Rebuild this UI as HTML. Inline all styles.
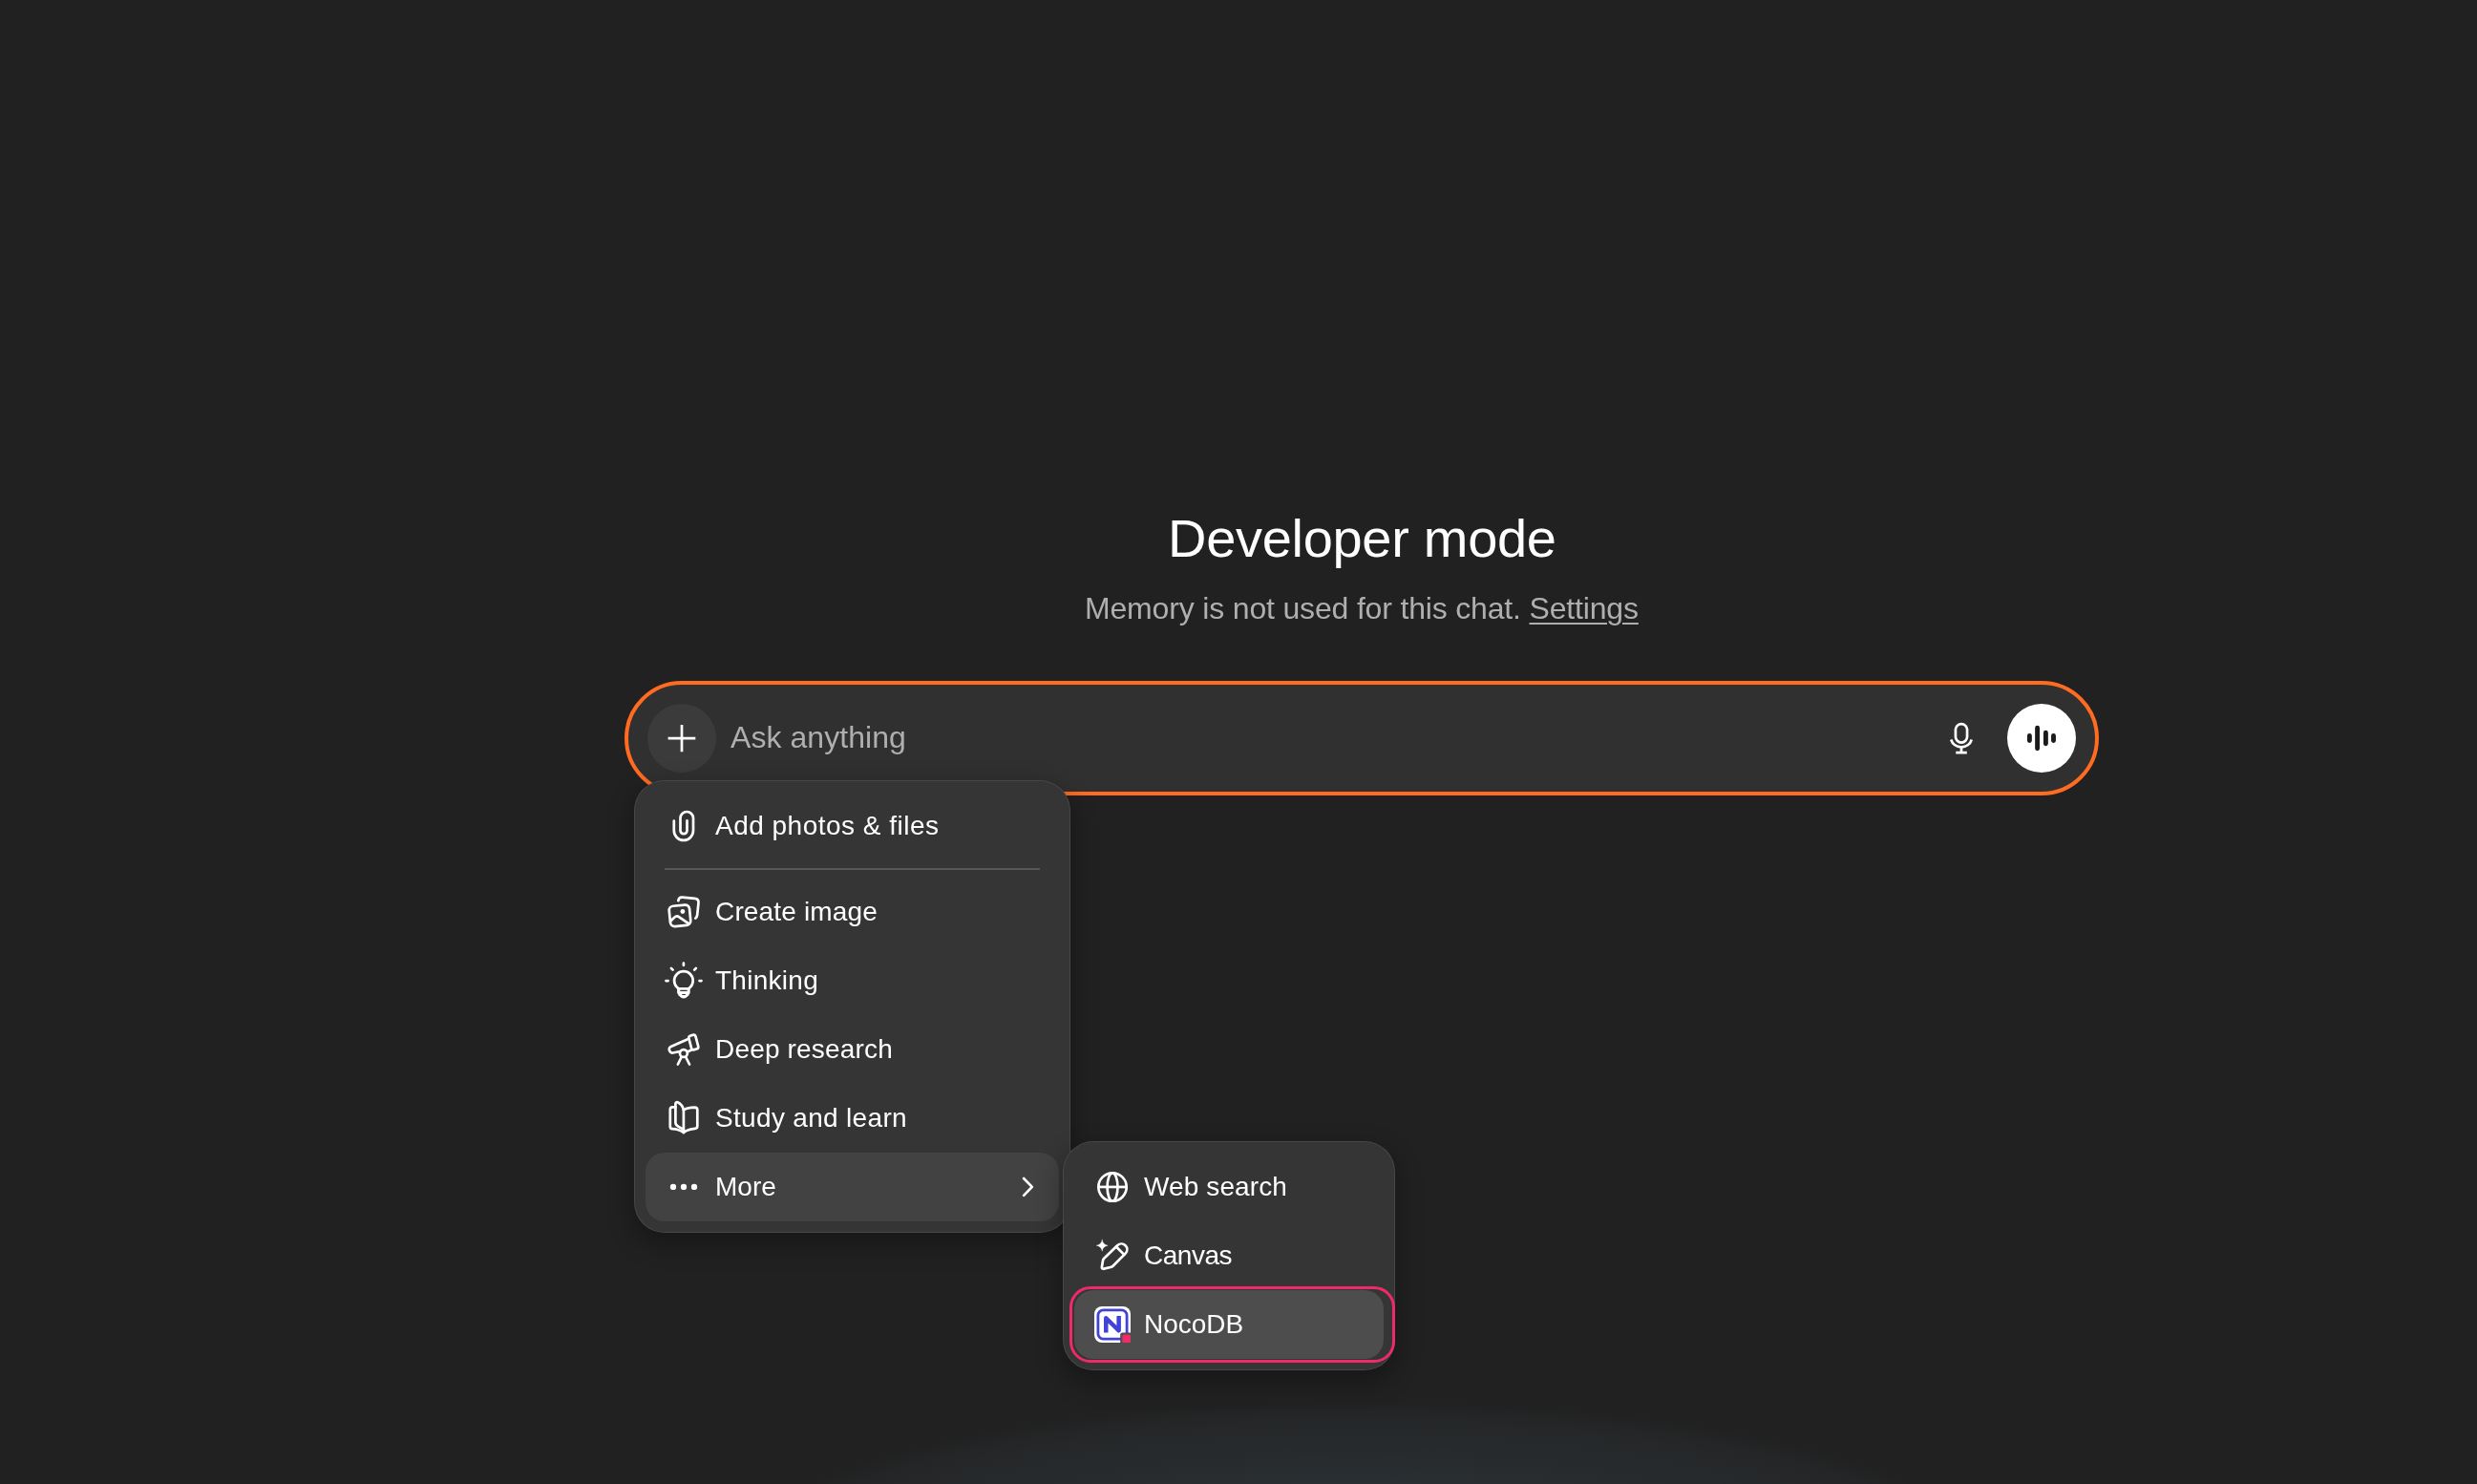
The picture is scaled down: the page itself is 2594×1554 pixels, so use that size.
<!DOCTYPE html>
<html lang="en">
<head>
<meta charset="utf-8">
<title>Developer mode</title>
<style>
  html, body { margin: 0; padding: 0; }
  body {
    width: 2594px; height: 1554px; overflow: hidden; position: relative;
    background: #212121;
    font-family: "Liberation Sans", sans-serif;
    color: #fff;
  }
  .abs { position: absolute; }
  .t { position: absolute; white-space: nowrap; line-height: 1; will-change: transform; }
  .glow {
    position: absolute; left: 0; top: 1404px; width: 2594px; height: 150px;
    background: radial-gradient(ellipse 640px 152px at 1425px 216px, rgba(70,90,105,0.33) 0%, rgba(70,90,105,0.24) 44%, rgba(70,90,105,0.13) 80%, rgba(70,90,105,0.07) 93%, rgba(70,90,105,0) 100%);
  }
  h1.title {
    margin: 0; font-weight: 400; font-size: 56px; letter-spacing: -0.3px;
    position: absolute; left: 1222.5px; top: 536px; line-height: 1; white-space: nowrap; color: #fff; will-change: transform;
  }
  .sub { font-size: 32px; letter-spacing: -0.17px; left: 1136.4px; top: 621px; color: #afafaf; }
  .sub a { color: #afafaf; text-decoration: underline; text-decoration-thickness: 2px; text-underline-offset: 4px; }

  .composer {
    position: absolute; left: 654px; top: 713px; width: 1544px; height: 120px; box-sizing: border-box;
    border: 4px solid #ff6b21; border-radius: 60px; background: #303030;
  }
  .plus { position: absolute; left: 678px; top: 737px; width: 72px; height: 72px; border-radius: 50%; background: #3b3b3b; }
  .ask { font-size: 32px; left: 765px; top: 756px; color: #afafaf; letter-spacing: 0.06px; }
  .voice { position: absolute; left: 2102px; top: 737px; width: 72px; height: 72px; border-radius: 50%; background: #fff; }

  .menu {
    position: absolute; box-sizing: border-box; background: #353535; border-radius: 32px;
    box-shadow: 0 0 0 1px rgba(255,255,255,0.09) inset, 0 10px 26px 3px rgba(0,0,0,0.30);
  }
  .menu1 { left: 664px; top: 817px; width: 457px; height: 474px; }
  .menu2 { left: 1113px; top: 1195px; width: 348px; height: 240px; }
  .row { position: absolute; height: 72px; border-radius: 20px; }
  .row.hl { background: #424242; }
  .divider { position: absolute; left: 696px; top: 909.4px; width: 393px; height: 2px; background: #575757; }
  .mi { font-size: 28px; color: #fff; }
  svg { position: absolute; overflow: visible; }
  .ico { fill: none; stroke: #fff; stroke-width: 2.7; stroke-linecap: round; stroke-linejoin: round; }
</style>
</head>
<body>
<div class="glow"></div>

<h1 class="title">Developer mode</h1>
<div class="t sub">Memory is not used for this chat. <a>Settings</a></div>

<div class="composer"></div>
<div class="plus"></div>
<svg class="ico" style="left:678px;top:737px" width="72" height="72" viewBox="0 0 72 72"><path d="M21.6 36.1H50.3M36 22V50.3" stroke-width="2.7" stroke-linecap="butt"/></svg>
<div class="t ask">Ask anything</div>
<div class="voice"></div>

<div class="menu menu1"></div>
<div class="divider"></div>
<div class="row hl" style="left:676px;top:1207px;width:433px"></div>

<div class="t mi" style="left:749px;top:851px;letter-spacing:0.49px">Add photos &amp; files</div>
<div class="t mi" style="left:749px;top:941px;letter-spacing:0.16px">Create image</div>
<div class="t mi" style="left:749px;top:1013px;letter-spacing:0.27px">Thinking</div>
<div class="t mi" style="left:749px;top:1085px;letter-spacing:0.18px">Deep research</div>
<div class="t mi" style="left:749px;top:1157px;letter-spacing:0.32px">Study and learn</div>
<div class="t mi" style="left:749px;top:1229px;letter-spacing:0.05px">More</div>

<div class="menu menu2"></div>
<div class="row" style="left:1125px;top:1351px;width:324px;background:#4d4d4d"></div>
<div class="abs" style="left:1119.6px;top:1347px;width:341.2px;height:80.1px;box-sizing:border-box;border:3.4px solid #ee2b69;border-radius:22px"></div>
<div class="t mi" style="left:1198px;top:1229px;letter-spacing:0.11px">Web search</div>
<div class="t mi" style="left:1198px;top:1301px;letter-spacing:-0.49px">Canvas</div>
<div class="t mi" style="left:1198px;top:1373px;letter-spacing:-0.04px">NocoDB</div>

<!-- icons -->
<svg class="ico" style="left:2024px;top:743px" width="60" height="60" viewBox="0 0 60 60">
  <rect x="23.95" y="15.1" width="12.1" height="19.5" rx="6.05"/>
  <path d="M19.2 31.5A11.33 11.33 0 0 0 40.8 31.5" stroke-linecap="butt"/>
  <path d="M30 39.4V45M24.3 45.1H35.8" stroke-linecap="butt"/>
</svg>
<svg style="left:2108px;top:743px" width="60" height="60" viewBox="0 0 60 60" fill="none" stroke="#1b1b1b" stroke-width="4.9" stroke-linecap="round">
  <path d="M17.4 27.55V32.55M25.6 19.25V40.85M34.4 24.25V35.75M42.5 27.55V32.55"/>
</svg>

<svg class="ico" style="left:686px;top:835px" width="60" height="60" viewBox="0 0 60 60">
  <path d="M19.8 24.7V34.8A10.1 10.1 0 0 0 40 34.8V21.75A6.75 6.75 0 0 0 26.5 21.75V34.7A3.5 3.5 0 0 0 33.5 34.7V24.3"/>
</svg>

<svg class="ico" style="left:686px;top:925px" width="60" height="60" viewBox="0 0 60 60">
  <g transform="translate(26 33.8) rotate(-5.5)">
    <rect x="-10.7" y="-10.7" width="21.4" height="21.4" rx="4.6"/>
  </g>
  <path d="M24.3 18.2C24.6 16 26 14.4 28.5 14.6L41.5 15.9C44 16.2 45.7 17.8 45.5 20.3L44.2 33C44 35 43.3 36 42.3 36.6"/>
  <path d="M16.3 39.5L20.3 35.6C21.8 34.2 23.7 34.1 25.3 35.3L35.5 42.3"/>
  <circle cx="28.9" cy="29.5" r="2.4" fill="#fff" stroke="none"/>
</svg>

<svg class="ico" style="left:686px;top:997px" width="60" height="60" viewBox="0 0 60 60">
  <circle cx="29.9" cy="29.9" r="9.8"/>
  <path d="M23.1 37V42C23.1 44 25.5 46.5 27.2 47.7C28.8 48.8 31 48.8 32.6 47.7C34.3 46.5 36.7 44 36.7 42V37Z" fill="#fff" stroke="none"/>
  <path d="M26.3 40.4H33.6M28.3 44.5H31.9" stroke="#353535" stroke-width="1.2" stroke-linecap="butt"/>
  <path d="M29.9 11.5V13.8M16.9 16.9L18.6 18.6M42.9 16.9L41.2 18.6M11.5 30.1H13.6M46.5 30.1H48.5"/>
</svg>

<svg class="ico" style="left:686px;top:1069px" width="60" height="60" viewBox="0 0 60 60">
  <path d="M33.6 19.5L16.6 26.9C14.6 27.8 14.4 29.8 15.2 31.4C15.9 33 16.9 33.9 18.6 33.5L25 32.2"/>
  <rect x="-3.7" y="-7.6" width="7.4" height="15.2" rx="2.5" transform="translate(40.3 22.5) rotate(-14.7)"/>
  <circle cx="29.9" cy="34" r="3.95"/>
  <path d="M27.6 38L23.9 45.5M32.2 38L36 45.5M34 32.4L38 30.6"/>
</svg>

<svg class="ico" style="left:686px;top:1141px" width="60" height="60" viewBox="0 0 60 60">
  <path d="M29.9 21.5C32 19.8 35.5 18.9 41.5 18.7C43.3 18.7 44.3 19.7 44.3 21.3V38.3C44.3 39.9 43.4 40.8 41.8 40.9C36.5 41.3 32.5 42.8 29.9 45V21.5Z"/>
  <path d="M29.9 21.5C29.2 18 26.5 14.5 23.6 13.2C22.3 12.8 21.4 13.6 21.4 15V34.5C21.4 36.5 22.5 37.6 24.3 38.6L29.9 41.8"/>
  <path d="M21.4 18.4H18.3C16.7 18.4 15.8 19.3 15.8 20.9V38.7C15.8 40.2 16.7 41.1 18.3 41.2C23 41.4 26.8 42.8 29.9 45"/>
</svg>

<svg style="left:686px;top:1213px" width="60" height="60" viewBox="0 0 60 60" fill="#fff">
  <circle cx="19" cy="29.9" r="3.15"/><circle cx="30" cy="29.9" r="3.15"/><circle cx="41" cy="29.9" r="3.15"/>
</svg>
<svg class="ico" style="left:1046px;top:1213px" width="60" height="60" viewBox="0 0 60 60">
  <path d="M26.1 21L34.8 29.9L26.1 38.9"/>
</svg>

<svg class="ico" style="left:1135px;top:1213px" width="60" height="60" viewBox="0 0 60 60">
  <circle cx="30.03" cy="30.03" r="14.7"/>
  <ellipse cx="30.03" cy="30.03" rx="5.45" ry="14.7"/>
  <path d="M15.3 29.95H44.7" stroke-linecap="butt"/>
</svg>

<svg class="ico" style="left:1135px;top:1285px" width="60" height="60" viewBox="0 0 60 60">
  <path d="M19.2 13.2C19.7 16.6 21.8 18.7 25.2 19.2C21.8 19.7 19.7 21.8 19.2 25.2C18.7 21.8 16.6 19.7 13.2 19.2C16.6 18.7 18.7 16.6 19.2 13.2Z" fill="#fff" stroke-width="0.3"/>
  <path d="M35.4 19A5.95 5.95 0 0 1 43.8 27.4L30.5 40.7C29.8 41.4 29 41.8 28 42L20.8 43.6C19.5 43.9 18.7 43.1 18.9 41.9L20 35C20.2 34 20.5 33.4 21.2 32.7Z"/>
  <path d="M33.9 20.5L42.3 28.9"/>
</svg>

<svg style="left:1146px;top:1368px" width="38" height="38" viewBox="0 0 38 38">
  <rect x="0" y="0" width="38" height="38" rx="8" fill="#fff"/>
  <rect x="3.9" y="3.9" width="30.2" height="30.2" rx="5.6" fill="none" stroke="#4142d6" stroke-width="2.8"/>
  <path d="M12.25 27.6V12.25L25.65 25.3V10" fill="none" stroke="#4142d6" stroke-width="4.5" stroke-linejoin="round" stroke-linecap="butt"/>
  <rect x="27.2" y="27.4" width="13" height="13" rx="2.2" fill="#4d4d4d"/>
  <rect x="29.3" y="29.6" width="8.7" height="8.4" rx="1.6" fill="#ee2c68"/>
</svg>
</body>
</html>
